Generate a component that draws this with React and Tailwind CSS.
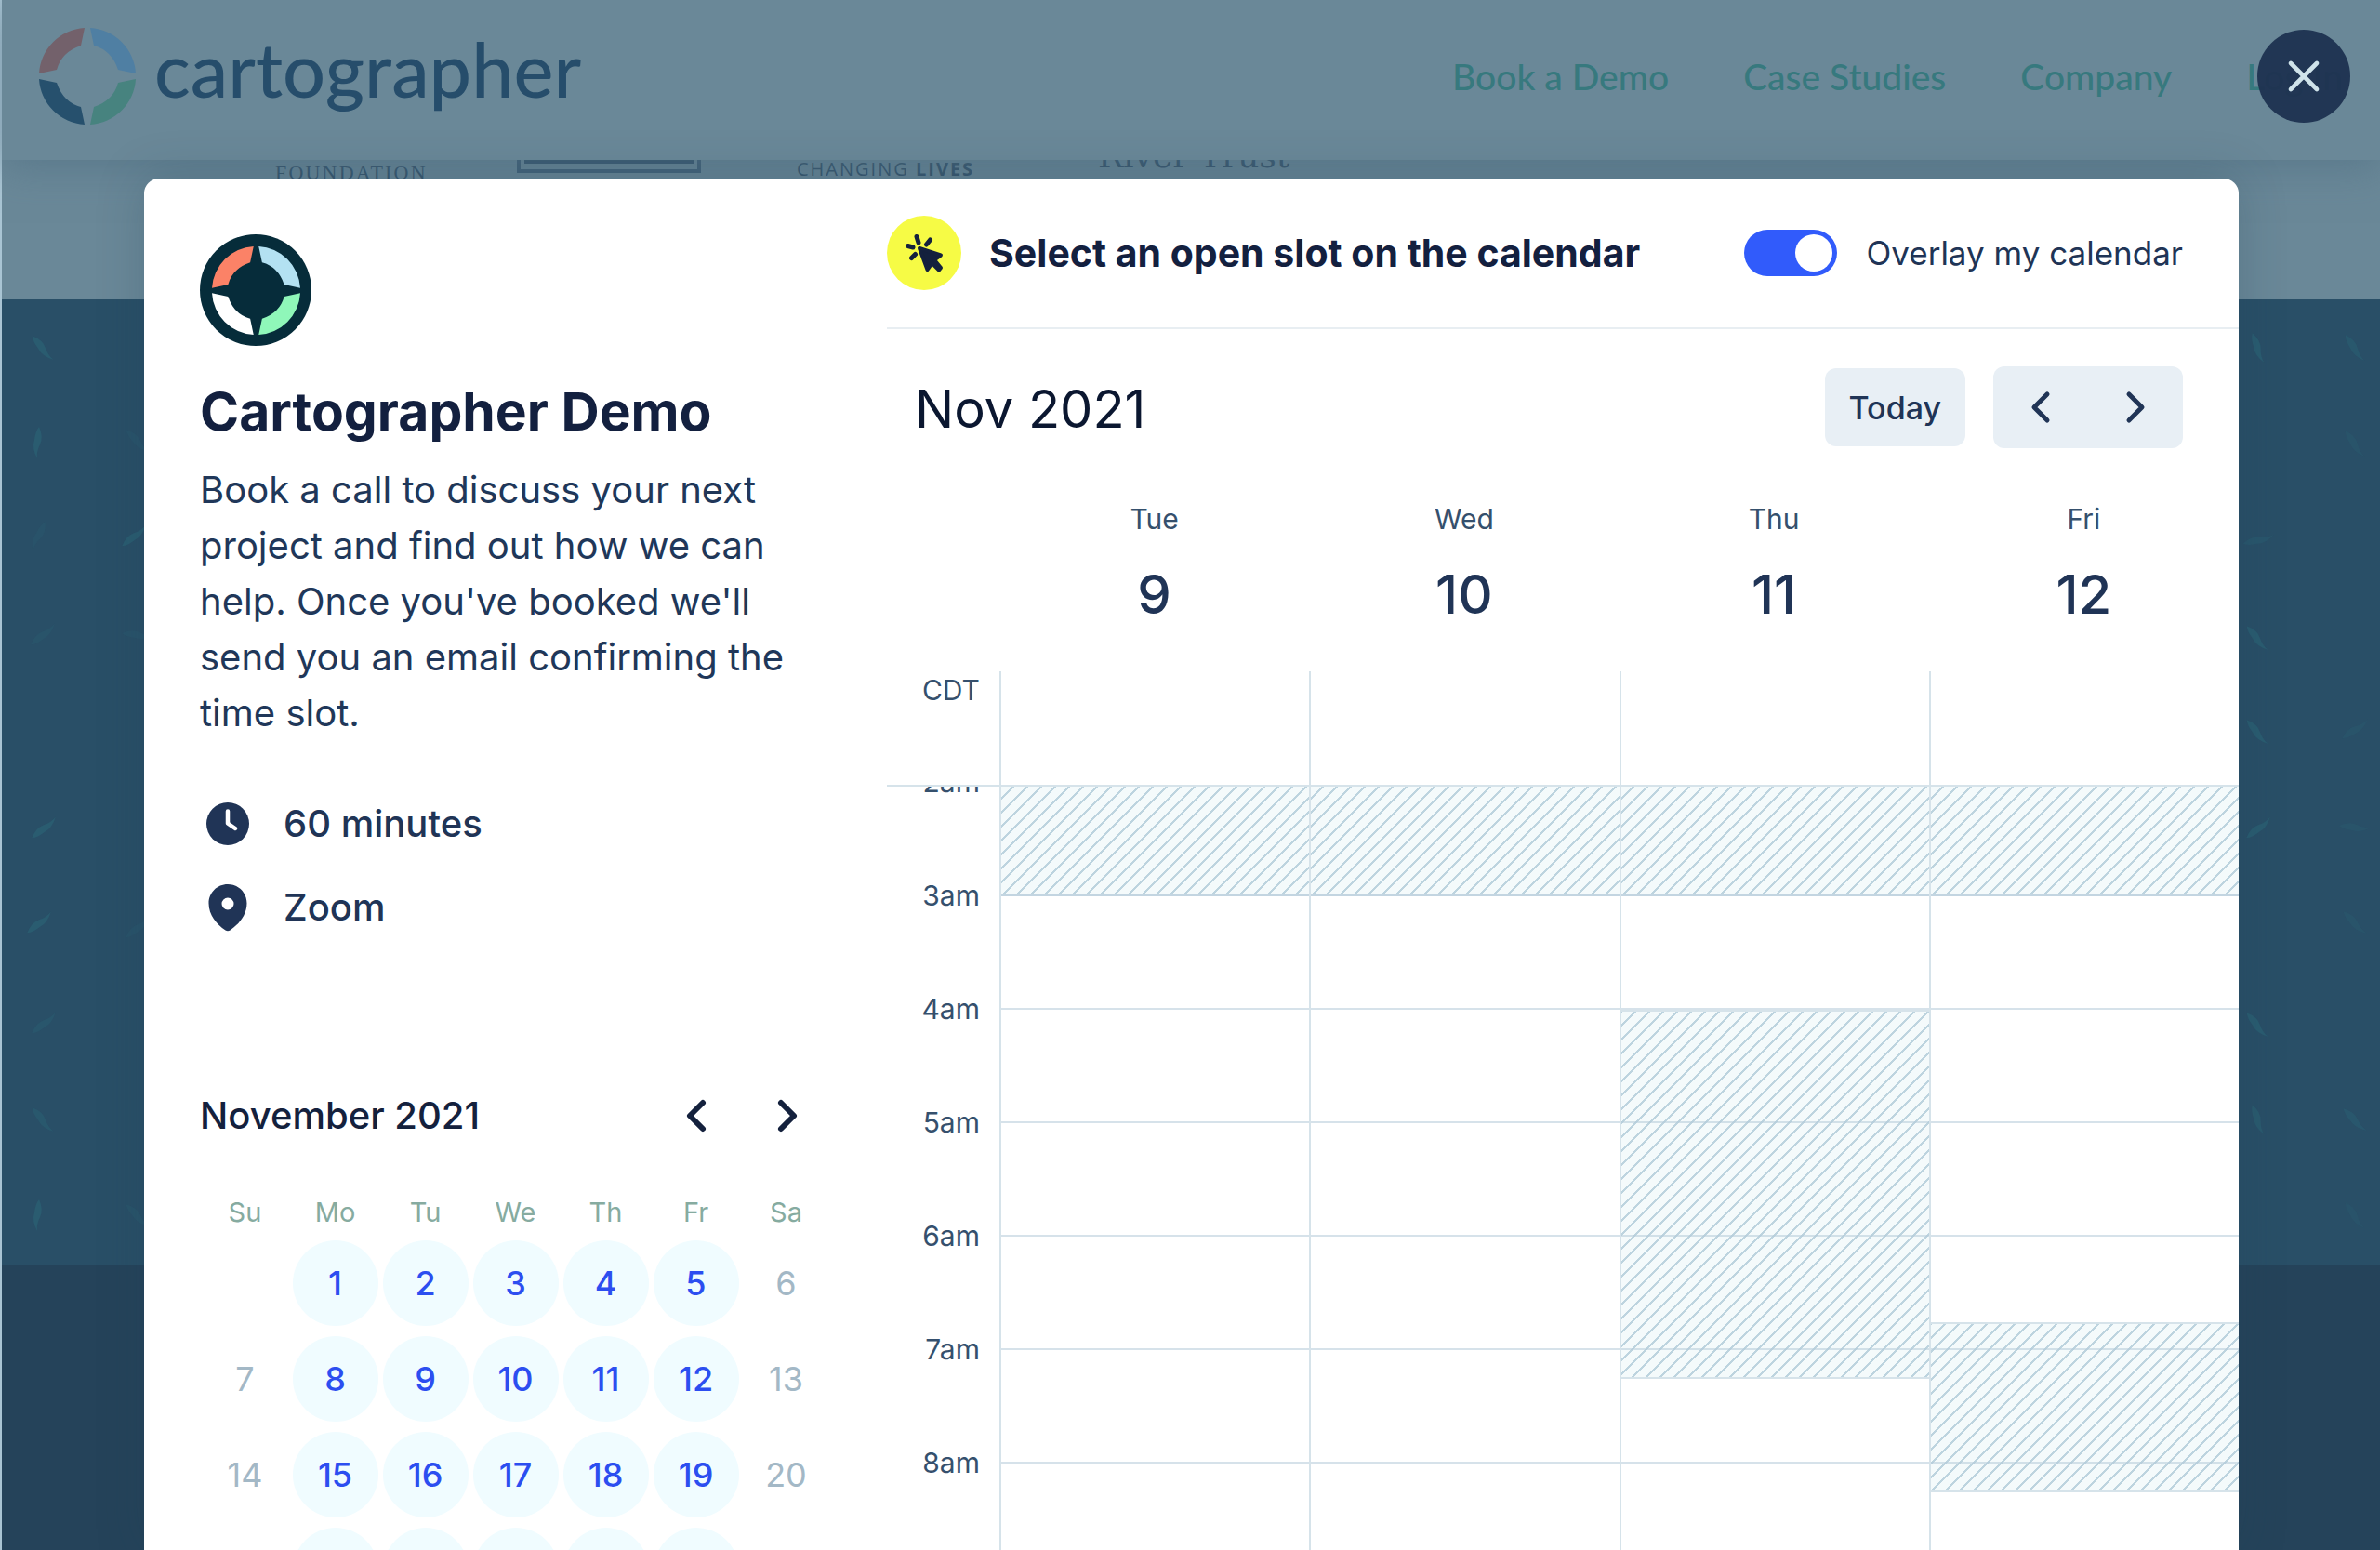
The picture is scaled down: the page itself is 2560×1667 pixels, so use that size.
import React, { useState } from 'react';
import { HiOutlineChevronLeft, HiOutlineChevronRight, HiOutlineX } from 'react-icons/hi';

const HOUR_HEIGHT = 122;
const FIRST_HOUR = 2;

const NAV_LINKS = ['Book a Demo', 'Case Studies', 'Company', 'Log In'];
const WEEKDAYS = ['Su', 'Mo', 'Tu', 'We', 'Th', 'Fr', 'Sa'];
const WEEKS = [
  [null, 1, 2, 3, 4, 5, 6],
  [7, 8, 9, 10, 11, 12, 13],
  [14, 15, 16, 17, 18, 19, 20],
  [21, 22, 23, 24, 25, 26, 27],
];
const HOURS = ['2am', '3am', '4am', '5am', '6am', '7am', '8am'];

// busy ranges are in hours
const DAYS = [
  { name: 'Tue', date: 9, busy: [[2, 3]] },
  { name: 'Wed', date: 10, busy: [[2, 3]] },
  { name: 'Thu', date: 11, busy: [[2, 3], [4, 7.25]] },
  { name: 'Fri', date: 12, busy: [[2, 3], [6.75, 8.25]] },
];

// [x, y, angle, opacity] of the confetti strokes
const LEFT_MARKS = [
  [44, 52, 45, 0.9], [39, 154, 90, 0.9], [40, 255, 110, 0.3], [44, 360, -45, 0.4],
  [45, 568, -45, 0.9], [40, 670, -45, 0.9], [45, 778, -45, 0.5], [44, 882, 45, 0.7],
  [39, 985, 90, 0.9], [146, 152, 40, 0.3], [142, 254, -45, 0.9], [146, 360, 0, 0.3],
  [146, 675, -45, 0.3], [146, 985, 40, 0.4],
];
const RIGHT_MARKS = [
  [24, 52, 65, 0.9], [24, 258, -20, 0.5], [23, 364, 45, 0.9], [23, 465, 45, 0.9],
  [24, 568, -45, 0.9], [23, 780, 45, 0.9], [24, 882, 65, 0.8], [128, 52, 50, 0.7],
  [128, 155, 50, 0.4], [128, 462, -40, 0.4], [128, 567, 0, 0.4], [128, 670, 40, 0.4],
  [128, 882, 40, 0.6], [128, 985, 50, 0.3],
];

const Compass = ({ colors, className }) => (
  <svg viewBox="-52 -52 104 104" className={className} aria-hidden="true">
    {colors.map((color, i) => (
      <path
        key={color}
        fill={color}
        transform={`rotate(${i * 90})`}
        d="M-3 -52 A52 52 0 0 0 -52 -3 L-33 -7 Q-28 -26 -7 -33Z"
      />
    ))}
  </svg>
);

const ClockIcon = () => (
  <svg viewBox="0 0 56 56" className="size-14" fill="currentColor" aria-hidden="true">
    <circle cx="28" cy="28" r="23" />
    <path d="M28 14.5V27.5L36 33" fill="none" stroke="#fff" strokeWidth="4.5" strokeLinecap="round" strokeLinejoin="round" />
  </svg>
);

const PinIcon = () => (
  <svg viewBox="0 0 56 56" className="size-14" fill="currentColor" aria-hidden="true">
    <path
      fillRule="evenodd"
      d="M28 3C16.5 3 7.500 12 7.500 23.500C7.500 36 16 46 25.500 52.500Q28 54 30.500 52.500C40 46 48.500 36 48.500 23.500C48.500 12 39.500 3 28 3ZM28 17.500A6.500 6.500 0 1 1 28 30.500A6.500 6.500 0 1 1 28 17.500Z"
    />
  </svg>
);

const ClickIcon = () => (
  <svg viewBox="-40 -40 80 80" className="size-20" stroke="currentColor" strokeLinecap="round" strokeLinejoin="round" aria-hidden="true">
    <path d="M-5 -5L18 2.500L11 7.500L18 16L16 18.500L8.500 11L3.500 18Z" fill="currentColor" strokeWidth="4" />
    <path d="M-8 -17.500L-6 -11M6.500 -14L2.500 -9M-17.500 -7.500L-12 -6M-13.500 5.500L-9.500 1.500" fill="none" strokeWidth="5" />
  </svg>
);

const Confetti = ({ marks }) => (
  <svg width="155" height="1038" viewBox="0 0 155 1038" aria-hidden="true">
    {marks.map(([x, y, angle, opacity]) => (
      <path
        key={`${x}-${y}`}
        d="M-17 -1 Q-6 -6 2 -2 Q10 2 17 1 Q6 7 -3 4 Q-12 3 -17 -1Z"
        fill="#2a5d71"
        opacity={opacity}
        transform={`translate(${x} ${y}) rotate(${angle})`}
      />
    ))}
  </svg>
);

const SitePage = () => (
  <div className="flex h-full flex-col border-l-2 border-[#a9c4d3] bg-[#6a8898]">
    <header className="z-10 flex h-[172px] shrink-0 items-center justify-between bg-[#6a8898] pr-10 pb-2 pl-10 shadow-[0_8px_40px_#4f6e8299]">
      <a href="#home" className="flex items-center gap-5 font-['Lato',sans-serif] text-[81px] leading-[100px] font-medium text-[#264d6b]">
        <Compass colors={['#73616b', '#4f7fa3', '#47837f', '#26506d']} className="size-[104px]" />
        <span className="pb-4">cartographer</span>
      </a>
      <nav className="flex gap-20 font-['Lato',sans-serif] text-[39px] leading-[50px] font-medium text-[#37797e]">
        {NAV_LINKS.map((link) => (
          <a key={link} href="#nav">{link}</a>
        ))}
      </nav>
    </header>

    {/* Client logos, scrolled under the header */}
    <div className="flex h-[150px] shrink-0 items-start pl-[294px] text-[#34536b]">
      <span className="w-[260px] font-['Liberation_Serif',serif] text-[22px] leading-7 tracking-widest">FOUNDATION</span>
      <span className="mr-[103px] h-[14px] w-[198px] border-4 border-t-0 border-[#3f5f77] px-1 pb-1">
        <span className="block h-1 bg-[#34536c]" />
      </span>
      <span className="w-[324px] font-['Open_Sans',sans-serif] text-[20px] leading-5 tracking-widest">
        CHANGING <b>LIVES</b>
      </span>
      <span className="-mt-7 font-['DejaVu_Serif',serif] text-[36px] leading-[48px]">River Trust</span>
    </div>

    <div className="flex h-[1038px] shrink-0 justify-between bg-[#294f67]">
      <Confetti marks={LEFT_MARKS} />
      <Confetti marks={RIGHT_MARKS} />
    </div>
    <footer className="flex-1 bg-[#25435a]" />
  </div>
);

const MiniCalendar = () => (
  <section className="mt-[164px]">
    <div className="flex items-center justify-between">
      <h2 className="text-[40px] leading-[60px] font-medium text-[#14213d]">November 2021</h2>
      <div className="flex gap-12 pr-6 text-[#14213d]">
        <button aria-label="Previous month"><HiOutlineChevronLeft className="size-12" strokeWidth={3} /></button>
        <button aria-label="Next month"><HiOutlineChevronRight className="size-12" strokeWidth={3} /></button>
      </div>
    </div>
    <table className="mt-14 w-full table-fixed text-center">
      <thead>
        <tr className="text-[29px] leading-9 text-[#86aba0]">
          {WEEKDAYS.map((day) => (
            <th key={day} className="pb-3 font-normal">{day}</th>
          ))}
        </tr>
      </thead>
      <tbody>
        {WEEKS.map((week, w) => (
          <tr key={w}>
            {week.map((day, i) => (
              <td key={i} className="pb-[11px]">
                {day && (
                  <button
                    disabled={i === 0 || i === 6}
                    className="size-[92px] rounded-full bg-[#f0fcff] text-[36px] font-medium text-[#2c4ef0] disabled:bg-transparent disabled:font-normal disabled:text-[#a3b8c6]"
                  >
                    {day}
                  </button>
                )}
              </td>
            ))}
          </tr>
        ))}
      </tbody>
    </table>
  </section>
);

const EventDetails = () => (
  <aside className="w-[799px] shrink-0 p-[60px]">
    <span className="flex size-[120px] items-center justify-center rounded-full bg-[#062c3a]">
      <Compass colors={['#fb8267', '#b3e1f2', '#8ff7b9', '#ffffff']} className="size-[95px]" />
    </span>
    <h1 className="mt-9 text-[57px] leading-[70px] font-bold whitespace-nowrap text-[#13203f]">Cartographer Demo</h1>
    <p className="mt-[19px] pr-10 text-[40px] leading-[60px] text-[#203759]">
      Book a call to discuss your next project and find out how we can help. Once you've booked we'll send you an email confirming the time slot.
    </p>
    <ul className="mt-[59px] flex flex-col gap-[30px] pl-0.5 text-[40px] leading-[60px] font-medium text-[#203456]">
      <li className="flex items-center gap-8">
        <ClockIcon />
        60 minutes
      </li>
      <li className="flex items-center gap-8">
        <PinIcon />
        Zoom
      </li>
    </ul>
    <MiniCalendar />
  </aside>
);

const DayColumn = ({ busy }) => (
  <div className="relative border-l-2 border-[#d6e3ea]">
    {busy.map(([from, to]) => (
      <div
        key={from}
        className="absolute inset-x-0 border-y-2 border-[#d6e3ea] bg-[#f4fafb] bg-[linear-gradient(135deg,#bdd4df_4%,transparent_4%_46%,#bdd4df_46%_54%,transparent_54%_96%,#bdd4df_96%)] bg-[length:15px_15px]"
        style={{
          top: (from - FIRST_HOUR) * HOUR_HEIGHT + 2,
          height: (to - from) * HOUR_HEIGHT,
        }}
      />
    ))}
    {HOURS.map((hour) => (
      <div key={hour} className="relative h-[122px] border-t-2 border-[#b4cbd8]/55" />
    ))}
  </div>
);

const WeekView = () => {
  const [overlay, setOverlay] = useState(true);

  return (
    <main className="flex min-w-0 flex-1 flex-col text-[#203456]">
      <div className="flex h-[162px] shrink-0 items-center border-b-2 border-[#e8eef2] pr-[60px]">
        <span className="rounded-full bg-[#f6fb45] text-[#14213d]">
          <ClickIcon />
        </span>
        <h2 className="ml-[30px] text-[41px] leading-[60px] font-bold text-[#13203f]">Select an open slot on the calendar</h2>
        <label className="ml-auto flex items-center gap-8 text-[35px] leading-[50px]">
          <input
            type="checkbox"
            role="switch"
            checked={overlay}
            onChange={(e) => setOverlay(e.target.checked)}
            className="flex h-[50px] w-[100px] appearance-none items-center rounded-full bg-slate-300 px-[5px] before:size-10 before:rounded-full before:bg-white checked:justify-end checked:bg-[#315bfb]"
          />
          Overlay my calendar
        </label>
      </div>

      <div className="mt-[39px] flex h-[90px] shrink-0 items-center pr-[60px] pl-[30px]">
        <h2 className="pt-1 text-[56px] leading-[70px] text-[#0b1730]">Nov 2021</h2>
        <button className="ml-auto h-[84px] rounded-xl bg-[#e8eff5] px-[26px] text-[34px] font-medium">Today</button>
        <div className="ml-[30px] flex h-[88px] items-center gap-[52px] rounded-xl bg-[#e8eff5] px-7">
          <button aria-label="Previous days"><HiOutlineChevronLeft className="size-12" strokeWidth={2.5} /></button>
          <button aria-label="Next days"><HiOutlineChevronRight className="size-12" strokeWidth={2.5} /></button>
        </div>
      </div>

      <div className="mt-[57px] flex shrink-0 pl-[121px]">
        {DAYS.map((day) => (
          <div key={day.name} className="flex-1 text-center">
            <div className="text-[30px] leading-9 text-[#35506d]">{day.name}</div>
            <div className="mt-7 text-[58px] leading-[70px] font-medium">{day.date}</div>
          </div>
        ))}
      </div>

      <div className="mt-12 flex h-[124px] shrink-0 border-b-2 border-[#d6e3ea] text-[30px] leading-10 text-[#35506d]">
        <div className="w-[121px] shrink-0 pr-[21px] text-right">CDT</div>
        {DAYS.map((day) => (
          <div key={day.name} className="flex-1 border-l-2 border-[#d6e3ea]" />
        ))}
      </div>

      {/* Hour grid, scrolled a little past 2am */}
      <div className="min-h-0 flex-1 overflow-hidden">
        <div className="-mt-1.5 grid grid-cols-[121px_repeat(4,1fr)]">
          <ul className="pr-[21px] text-right text-[30px] leading-9 text-[#35506d]">
            {HOURS.map((hour) => (
              <li key={hour} className="h-[122px]">
                <span className="relative -top-[17px]">{hour}</span>
              </li>
            ))}
          </ul>
          {DAYS.map((day) => (
            <DayColumn key={day.name} busy={day.busy} />
          ))}
        </div>
      </div>
    </main>
  );
};

const App = () => (
  <div className="relative h-screen overflow-hidden font-['Inter',sans-serif]">
    <SitePage />

    {/* Booking dialog */}
    <div className="absolute inset-0 z-20 flex pt-[192px] pr-[152px] pl-[155px]">
      <div role="dialog" aria-label="Cartographer Demo" className="flex flex-1 overflow-hidden rounded-t-2xl bg-white shadow-[0_0_50px_#1f3e5240]">
        <EventDetails />
        <WeekView />
      </div>
    </div>
    <button
      aria-label="Close"
      className="absolute top-8 right-8 z-30 flex size-[100px] items-center justify-center rounded-full bg-[#1e3250]/95 text-[#cfe3ea]"
    >
      <HiOutlineX className="size-14" strokeWidth={2} />
    </button>
  </div>
);

export default App;
